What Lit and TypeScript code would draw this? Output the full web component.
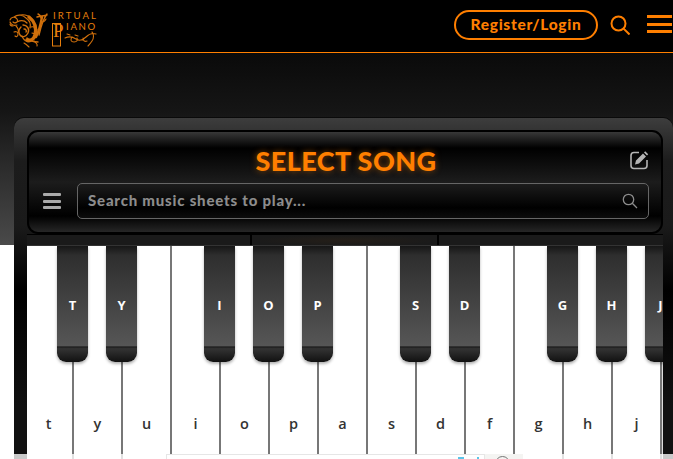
import { LitElement, html, css, svg } from 'lit';
import { customElement } from 'lit/decorators.js';

const WHITE = ['t', 'y', 'u', 'i', 'o', 'p', 'a', 's', 'd', 'f', 'g', 'h', 'j'];
// black key left edge inside the keyboard, x measured from the white key row
const BLACK = [
  { label: 'T', x: 30 },
  { label: 'Y', x: 79 },
  { label: 'I', x: 177 },
  { label: 'O', x: 226 },
  { label: 'P', x: 275 },
  { label: 'S', x: 373 },
  { label: 'D', x: 422 },
  { label: 'G', x: 520 },
  { label: 'H', x: 569 },
  { label: 'J', x: 618 },
];

const logo = svg`
  <svg class="logo" width="100" height="46" viewBox="0 0 100 46" fill="none" stroke="#d0700c" stroke-linecap="round">
    <path stroke-width="1.200" d="M10 15c1-3 5-4 7-1s-2 5-4 3M10 17c1 3 4 4 7 3M14 12c4-3 9-2 12 1 3 2 5 6 4 10M20 10c5-1 9 1 12 4M17 17c4-2 8-1 10 1"/>
    <path stroke-width="3.400" d="M29 12c5 4 8 10 6 18-1 4-4 6-8 5"/>
    <path stroke-width="1.400" d="M23 20c4 0 7 4 5 8s-6 5-8 2-1-6 1-8M24 24c2 0 3 2 2 3M27 33c3 3 7 4 11 4M37 12c4-1 7-1 10-2M47 9c-3 4-6 12-8 21M38 9c2 1 3 2 3 4"/>
    <path stroke-width="2.400" d="M42 12c-1 6-3 14-6 20"/>
    <path stroke-width="1.100" d="M16 21c2 2 3 4 2 7M22 31c1 3 3 5 6 6 3 0 5-2 5-4M34 36c2 2 4 3 3 5M14 27c2-1 4 0 4 2 0 3-2 3-3 2M31 22c3-1 6 1 6 3M24 38c2 1 4 3 5 4M13 21c-2 0-3-1-3-2M32 28c2 1 4 1 6 0M46 14c-1 2-2 3-4 3"/>
    <path stroke-width="1.100" d="M65 33c4-2 8-1 11 1s7 1 10-2 7-4 10-3M72 32c-2 3-1 5 2 5s4-2 3-4M83 33c0 3 2 4 4 3M92 27c2 2 2 6 0 9s-3 4-4 5M67 29l3 1M75 30l3 1"/>
    <rect x="52.500" y="18.500" width="8" height="22.500" stroke="#e67e0c" stroke-width="1"/>
    <text x="53" y="32" font-family="Liberation Serif, serif" font-size="19" fill="#e67e0c" stroke="none">P</text>
    <text x="53" y="14" font-family="Lato, sans-serif" font-size="9.600" letter-spacing="2.100" fill="#e67e0c" stroke="none">IRTUAL</text>
    <text x="66" y="24.500" font-family="Lato, sans-serif" font-size="9.600" letter-spacing="1.700" fill="#e67e0c" stroke="none">IANO</text>
  </svg>
`;

@customElement('app-root')
export class AppRoot extends LitElement {
  static styles = css`
    :host {
      display: block;
      position: relative;
      width: 673px;
      height: 459px;
      overflow: hidden;
      background: #fff;
      font-family: 'Lato', 'Noto Sans', sans-serif;
    }
    .header {
      height: 52px;
      box-sizing: content-box;
      background: #000;
      border-bottom: 1px solid #ff7f00;
      display: flex;
      align-items: center;
      padding-right: 1px;
    }
    .logo {
      display: block;
      margin-top: 3px;
    }
    .spacer {
      flex: 1;
    }
    .login {
      width: 144px;
      height: 30px;
      box-sizing: border-box;
      border: 2px solid #ff7f00;
      border-radius: 15px;
      color: #ff7f00;
      font-size: 15.5px;
      font-weight: 900;
      letter-spacing: 0.7px;
      display: flex;
      align-items: center;
      justify-content: center;
      margin-top: -3px;
      padding-bottom: 1px;
    }
    .top-search {
      display: block;
      margin: -2px 17px 0 12px;
    }
    .burger {
      display: flex;
      flex-direction: column;
      justify-content: space-between;
      width: 25px;
      height: 18px;
      margin-top: -4px;
    }
    .burger span {
      height: 3px;
      background: #ff7f00;
    }
    .hero {
      height: 192px;
      padding-top: 65px;
      box-sizing: border-box;
      background: linear-gradient(180deg, #0a0a0a 0%, #151515 30%, #4a4a4a 100%);
    }
    .frame {
      margin-left: 14px;
      width: 659px;
      height: 360px;
      box-sizing: border-box;
      padding: 12px 10px 0 13px;
      border-radius: 10px 10px 0 0;
      box-shadow: 0 -1px 0 #0a0a0a;
      background: linear-gradient(180deg, #3d3d3d 0%, #1c1c1c 12%, #1a1a1a 30%, #000 48%, #111 80%, #111 100%);
    }
    .panel {
      height: 104px;
      box-sizing: border-box;
      border: 2px solid #000;
      border-radius: 11px;
      padding: 13px 12px 0 14px;
      background: linear-gradient(180deg, #383838 0%, #000 16%, #1c1c1c 50%, #000 84%, #262626 100%);
    }
    .title-row {
      display: grid;
      grid-template-columns: 1fr auto 1fr;
      align-items: center;
      height: 30px;
    }
    .title {
      grid-column: 2;
      color: #ff7f00;
      font-size: 27px;
      font-weight: 900;
      line-height: 29px;
      letter-spacing: 0.4px;
      text-shadow: 0 0 6px rgba(255, 127, 0, 0.5);
    }
    .edit {
      justify-self: end;
      display: block;
    }
    .search-row {
      display: flex;
      align-items: center;
      gap: 16px;
      margin-top: 8px;
    }
    .menu {
      display: flex;
      flex-direction: column;
      justify-content: space-between;
      width: 18px;
      height: 16px;
      flex: none;
    }
    .menu span {
      height: 3px;
      border-radius: 1px;
      background: #aaa;
    }
    .search {
      flex: 1;
      height: 36px;
      box-sizing: border-box;
      border: 1px solid #666;
      border-radius: 5px;
      display: flex;
      align-items: center;
      padding: 0 10px;
      background: linear-gradient(180deg, #1c1c1c 0%, #000 70%, #0c0c0c 100%);
    }
    .placeholder {
      flex: 1;
      color: #8c8c8c;
      font-size: 15px;
      font-weight: 900;
      letter-spacing: 0.8px;
      padding-bottom: 2px;
    }
    .strip {
      height: 12px;
      display: grid;
      grid-template-columns: 223px 1fr 224px;
      gap: 2px;
      background: #000;
      border-top: 1px solid #000;
      box-sizing: border-box;
    }
    .strip div {
      background: #1a1a1a;
    }
    .strip .mid {
      background: radial-gradient(ellipse at 50% 50%, #241e18 0%, #1a1a1a 70%);
    }
    .keys {
      position: relative;
      height: 300px;
      overflow: hidden;
      display: flex;
      box-shadow: 0 -1px 0 #333;
    }
    .white {
      flex: none;
      width: 49px;
      box-sizing: border-box;
      height: 100%;
      background: #fff;
      border-right: 2px solid #777;
      box-shadow: 1px 0 0 #ddd;
      display: flex;
      justify-content: center;
      padding-top: 168px;
      color: #333;
      font-family: 'Open Sans', sans-serif;
      font-size: 14.5px;
      font-weight: 600;
    }
    .white:first-child {
      margin-left: -2px;
    }
    .black {
      position: absolute;
      top: 0;
      width: 31px;
      height: 116px;
      box-sizing: border-box;
      border-radius: 0 0 9px 9px;
      background: linear-gradient(180deg, #161616 0%, #2e2e2e 8%, #565656 86%, #1c1c1c 87%, #333 88.500%, #111 100%);
      box-shadow: 0 2px 3px rgba(0, 0, 0, 0.3);
      color: #fff;
      font-family: 'Open Sans', sans-serif;
      font-size: 13px;
      font-weight: 700;
      text-align: center;
      padding-top: 51px;
      line-height: 16px;
    }
    .ad-bar {
      position: absolute;
      left: 0;
      right: 0;
      bottom: 0;
      height: 5px;
      background: rgba(255, 255, 255, 0.78);
    }
    .ad {
      position: absolute;
      left: 166px;
      top: 0;
      width: 319px;
      height: 5px;
      box-sizing: border-box;
      background: #fff;
      border: 1px solid #e6e6e6;
      border-bottom: none;
    }
    .ad-speck {
      position: absolute;
      top: 2px;
      height: 3px;
      background: #5cc4e8;
    }
    .ad-side {
      position: absolute;
      left: 485px;
      top: 0;
      width: 38px;
      height: 5px;
      overflow: hidden;
      background: #f4f4f2;
    }
    .ad-side i {
      position: absolute;
      left: 10px;
      top: 2px;
      width: 15px;
      height: 15px;
      box-sizing: border-box;
      border: 1px solid #777;
      border-radius: 50%;
    }
  `;

  render() {
    return html`
      <div class="header">
        ${logo}
        <div class="spacer"></div>
        <div class="login">Register/Login</div>
        <svg class="top-search" width="20" height="20" viewBox="0 0 20 20" fill="none" stroke="#ff7f00" stroke-width="2">
          <circle cx="8.500" cy="8.500" r="7"/>
          <path d="M13.600 13.600 19.500 19.500"/>
        </svg>
        <div class="burger"><span></span><span></span><span></span></div>
      </div>
      <div class="hero">
        <div class="frame">
          <div class="panel">
            <div class="title-row">
              <div class="title">SELECT SONG</div>
              <svg class="edit" width="20" height="20" viewBox="0 0 20 20" fill="none" stroke="#b5b5b5">
                <path stroke-width="1.600" d="M10 2.500H5a3 3 0 0 0-3 3v10a3 3 0 0 0 3 3h10a3 3 0 0 0 3-3V10"/>
                <path fill="#b5b5b5" stroke="none" d="M6 14.500l1-4 7-7 3 3-7 7zM15 2.500l1.200-1.200 3 3L18 5.500z"/>
              </svg>
            </div>
            <div class="search-row">
              <div class="menu"><span></span><span></span><span></span></div>
              <div class="search">
                <div class="placeholder">Search music sheets to play...</div>
                <svg width="16" height="16" viewBox="0 0 16 16" fill="none" stroke="#8c8c8c" stroke-width="1.300">
                  <circle cx="6.500" cy="6.500" r="5.200"/>
                  <path d="M10.300 10.300 15 15"/>
                </svg>
              </div>
            </div>
          </div>
          <div class="strip"><div></div><div class="mid"></div><div></div></div>
          <div class="keys">
            ${WHITE.map((k) => html`<div class="white">${k}</div>`)}
            ${BLACK.map((k) => html`<div class="black" style="left:${k.x}px">${k.label}</div>`)}
          </div>
        </div>
      </div>
      <div class="ad-bar">
        <div class="ad">
          <span class="ad-speck" style="left:291px;width:6px"></span>
          <span class="ad-speck" style="left:310px;width:2px"></span>
        </div>
        <div class="ad-side"><i></i></div>
      </div>
    `;
  }
}
